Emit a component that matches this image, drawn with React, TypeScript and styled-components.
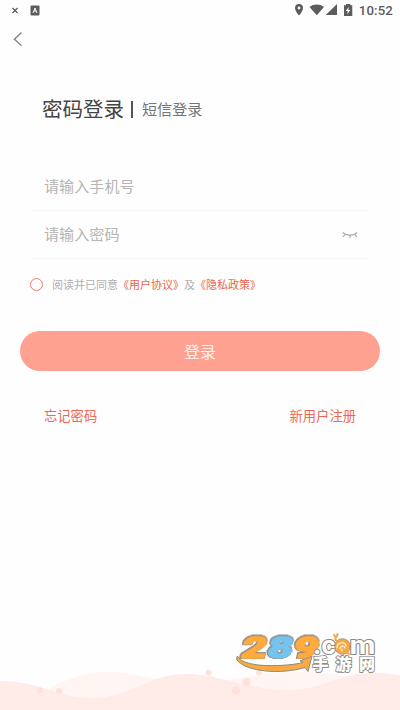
import React from 'react';
import styled, { createGlobalStyle } from 'styled-components';

const GlobalStyle = createGlobalStyle`
  * { box-sizing: border-box; }
  body { margin: 0; background: #fefefe; }
  button, input { font: inherit; border: 0; padding: 0; background: none; }
`;
const Screen = styled.main`
  position: relative;
  width: 400px;
  height: 710px;
  overflow: hidden;
  background: #fefefe;
  font-family: "Noto Sans CJK SC", sans-serif;
`;
const StatusBar = styled.header`
  height: 20px;
  display: flex;
  align-items: center;
  justify-content: space-between;
  padding: 0 7px 0 10px;
  color: #5c5c5c;
`;
const StatusGroup = styled.div`
  display: flex;
  align-items: center;
  height: 20px;
`;
const Clock = styled.time`
  font: 500 13.2px/20px Roboto, sans-serif;
  letter-spacing: 0.15px;
  padding-top: 1px;
`;
const NavBar = styled.nav`
  height: 38px;
  padding: 11px 0 0 12px;
`;
const BackButton = styled.button`
  display: block;
  height: 16px;
  line-height: 0;
`;
const Tabs = styled.div`
  height: 94px;
  display: flex;
  align-items: flex-start;
  padding: 35px 0 0 42px;
`;
const Tab = styled.span<{ $active?: boolean }>`
  font-size: ${p => (p.$active ? 20.5 : 15.1)}px;
  line-height: 30px;
  color: ${p => (p.$active ? '#444' : '#747474')};
`;
const Divider = styled.i`
  width: 2px;
  height: 17px;
  margin: 8px 9px 0 7px;
  background: #555;
`;
const Form = styled.form`
  margin: 10px 32px 0;
`;
const Field = styled.label`
  height: 48.5px;
  display: flex;
  align-items: center;
  justify-content: space-between;
  padding: 0 10px 2px 12px;
  border-bottom: 1px solid #f6f6f6;
`;
const Input = styled.input`
  width: 200px;
  height: 30px;
  font-size: 15.1px;
  outline: 0;
  &::placeholder { color: #b5b5b5; opacity: 1; }
`;
const EyeIcon = styled.svg`
  margin-top: 3px;
`;
const Agreement = styled.div`
  display: flex;
  align-items: center;
  height: 20px;
  margin: 15px 0 0 30px;
  font-size: 11px;
  color: #b0b0b0;
  white-space: nowrap;
`;
const Radio = styled.span`
  width: 13px;
  height: 13px;
  border: 1.2px solid #ed7b68;
  border-radius: 50%;
  margin-right: 9px;
`;
const Policy = styled.a`
  color: #ec6450;
`;
const LoginButton = styled.button`
  display: block;
  width: 360px;
  height: 40px;
  margin: 37px 20px 0;
  border-radius: 20px;
  background: #ffa190;
  color: #fff3f0;
  font-size: 16px;
  line-height: 40px;
`;
const Links = styled.div`
  display: flex;
  justify-content: space-between;
  padding: 35px 44px 0;
  font-size: 13.3px;
  line-height: 20px;
  color: #ed6854;
`;
const Waves = styled.svg`
  position: absolute;
  left: 0;
  bottom: 0;
  display: block;
`;
const Watermark = styled.svg`
  position: absolute;
  left: 230px;
  top: 625px;
  overflow: visible;
`;
const Digit = styled.text<{ $tone: string }>`
  font: 900 31px Roboto, sans-serif;
  fill: ${p => p.$tone};
  stroke: ${p => p.$tone};
  stroke-width: 1.6px;
  stroke-linejoin: miter;
  filter: drop-shadow(0.8px 0 0 #8d8981) drop-shadow(-0.8px 0 0 #8d8981) drop-shadow(0 0.8px 0 #8d8981) drop-shadow(0 -0.8px 0 #8d8981);
`;

const StatusIcons = () => (
  <svg width="66" height="18" viewBox="0 0 66 18" fill="currentColor">
    <path fillRule="evenodd" d="M6 3a4 4 0 0 0-4 4c0 3 4 7.500 4 7.500S10 10 10 7a4 4 0 0 0-4-4Zm0 2.600a1.400 1.400 0 1 1 0 2.800 1.400 1.400 0 0 1 0-2.800Z" />
    <path d="M16.500 6c4-3.300 10.500-3.300 14.500 0L23.800 14.300Z" />
    <path d="M44 3v11H32.700Z" />
    <path fillRule="evenodd" d="M53 3v1.200h-2V15h8.300V4.200h-2V3Zm2.700 3-2.900 4h1.900l-.4 3.200 3-4.200h-1.900Z" />
  </svg>
);

const Logo = () => (
  <Watermark width="150" height="50" viewBox="0 0 150 50">
    <path d="M7.500 31C9 36 20 40 36 40.500C52 41 65 39.500 73 37.500L70 36 82 31 78 46.500 75 42.500C54 49 28 47 15 41C8 37.500 5 34 7.500 31Z" fill="#f9aa42" stroke="#8e8981" strokeWidth="1" strokeLinejoin="round" />
    <g transform="translate(10 33) skewX(-12)">
      <Digit $tone="#ffab3d" textLength="25" lengthAdjust="spacingAndGlyphs">2</Digit>
      <Digit $tone="#ffab3d" x="52" textLength="25" lengthAdjust="spacingAndGlyphs">9</Digit>
      <Digit $tone="#75c3ef" x="26" textLength="25" lengthAdjust="spacingAndGlyphs">8</Digit>
    </g>
    <g stroke="#8e8981" strokeLinejoin="round" paintOrder="stroke">
      <g fontFamily="Inter, sans-serif" fontWeight="700" fontSize="25" fill="#fff" strokeWidth="2">
        <text x="83" y="28.500" textLength="23" lengthAdjust="spacingAndGlyphs">.c</text>
        <text x="119.500" y="28.500" textLength="26" lengthAdjust="spacingAndGlyphs">m</text>
      </g>
      <g fontFamily="Noto Sans CJK SC, sans-serif" fontWeight="900" fontSize="16" fill="#fff" strokeWidth="1.800">
        <text x="82.500" y="44.500">手</text><text x="105.500" y="44.500">游</text><text x="129" y="44.500">网</text>
      </g>
    </g>
    <g fill="none" strokeLinecap="round">
      <circle cx="112.500" cy="21.500" r="7.800" fill="#f7a946" stroke="#a18661" strokeWidth=".8" />
      <path d="m115 26 4 3M107 16c-2-1-2-3-1-4m-1-1-1-1m3 1 .5-2" stroke="#f5a63f" strokeWidth="2" />
      <path d="M107 23c0-6 8-7 9-2M110 24c0-3 4-4 5-1M112 26v-2" stroke="#fff4df" strokeWidth="1.200" />
    </g>
  </Watermark>
);

export default function App() {
  return (
    <Screen>
      <GlobalStyle />
      <StatusBar>
        <StatusGroup>
          <svg width="32" height="16" viewBox="0 0 32 16">
            <path d="m2.500 6 5 5m0-5-5 5" stroke="currentColor" strokeWidth="1.300" />
            <rect x="20.500" y="3.500" width="9" height="10" rx="1" fill="currentColor" />
            <path d="m23 11 2-5 2 5m-3-2h2" fill="none" stroke="#fff" strokeWidth="1" />
          </svg>
        </StatusGroup>
        <StatusGroup><StatusIcons /><Clock>10:52</Clock></StatusGroup>
      </StatusBar>
      <NavBar>
        <BackButton type="button" aria-label="返回">
          <svg width="12" height="16" viewBox="0 0 12 16"><path d="M9.500 1.500 2.500 8.300l7 6.500" fill="none" stroke="#888" strokeWidth="1.500" /></svg>
        </BackButton>
      </NavBar>
      <Tabs><Tab $active>密码登录</Tab><Divider /><Tab>短信登录</Tab></Tabs>
      <Form>
        <Field><Input placeholder="请输入手机号" /></Field>
        <Field>
          <Input type="password" placeholder="请输入密码" />
          <EyeIcon width="16" height="8" viewBox="0 0 16 8"><path d="M.8 1.300C4 5 12 5 15.200 1.300M3 3.500 1 6m7-2v3m5-3.500L15 6" fill="none" stroke="#aaa" strokeWidth="1.200" /></EyeIcon>
        </Field>
      </Form>
      <Agreement>
        <Radio /><span>阅读并已同意</span><Policy>《用户协议》</Policy><span>及</span><Policy>《隐私政策》</Policy>
      </Agreement>
      <LoginButton type="button">登录</LoginButton>
      <Links><span>忘记密码</span><span>新用户注册</span></Links>
      <Waves width="400" height="50" viewBox="0 0 400 50">
        <path d="M50 28C74 16 88 12 107 12c32 0 49 11 88 11 35 0 60-11 105-11 45 0 70 12 100 17v21H50Z" fill="#fff5f3" />
        <path d="M0 21c40 0 58 17 91 17 42 0 57-24 94-24 35 0 63 16 102 16 38 0 50-17 84-17 12 0 20 1 29 2v35H0Z" fill="#ffebe8" />
        <g fill="#ffe1dc"><circle cx="39.500" cy="30" r="3" /><circle cx="59" cy="31" r="3" /><circle cx="208.500" cy="12.500" r="3" /><circle cx="246.500" cy="22" r="4" /><circle cx="236" cy="30.500" r="4" /><circle cx="259" cy="12.500" r="3" /></g>
      </Waves>
      <Logo />
    </Screen>
  );
}
